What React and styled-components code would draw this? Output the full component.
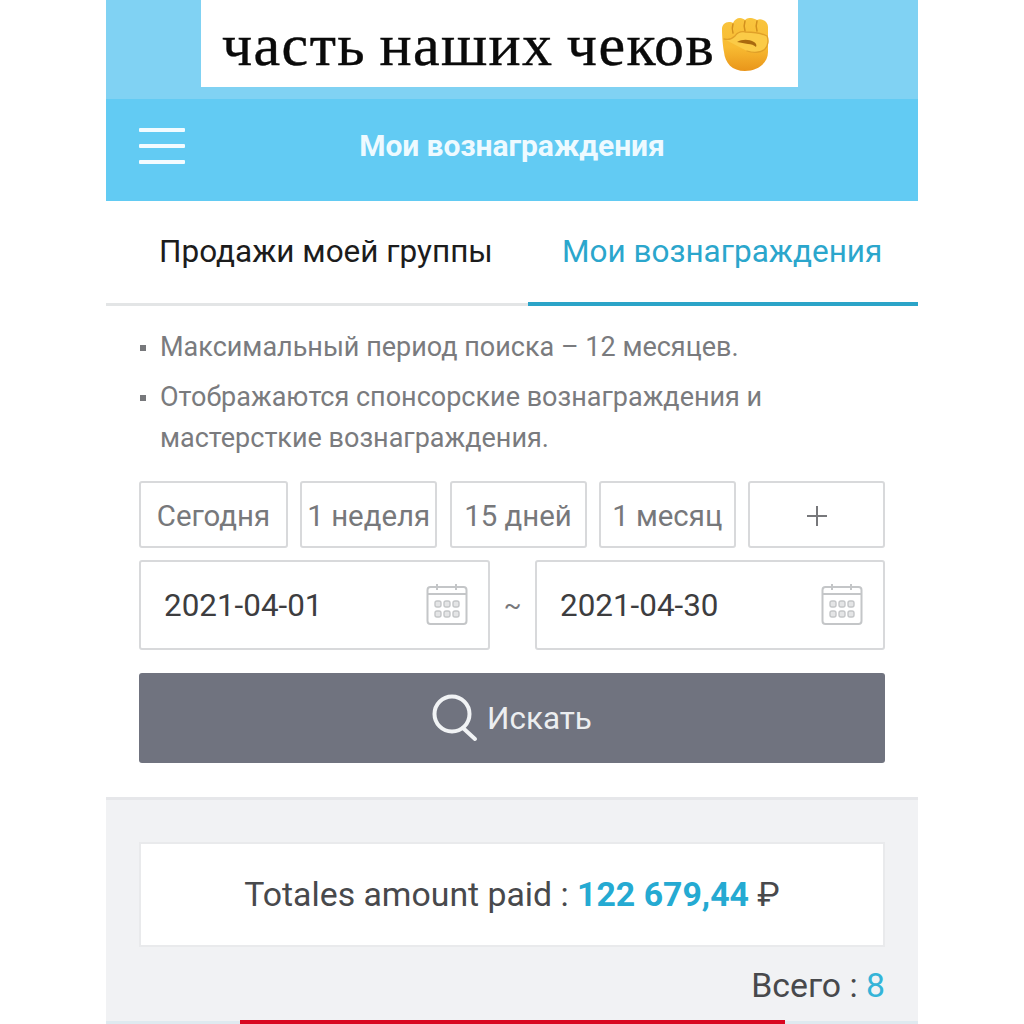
import React from "react";
import styled, { createGlobalStyle } from "styled-components";

const GlobalStyle = createGlobalStyle`
  html, body {
    margin: 0;
    padding: 0;
    background: #fff;
  }
  body {
    font-family: Roboto, "Liberation Sans", sans-serif;
  }
`;

const Page = styled.div`
  width: 1024px;
  height: 1024px;
  overflow: hidden;
  display: flex;
  justify-content: center;
  background: #fff;
`;

const Phone = styled.div`
  width: 812px;
  display: flex;
  flex-direction: column;
`;

const TopBand = styled.div`
  height: 99px;
  flex: none;
  background: #80d2f3;
  padding-left: 95px;
`;

const Caption = styled.div`
  width: 597px;
  height: 87px;
  background: #fff;
  display: flex;
  align-items: flex-end;
  padding: 0 0 7px 21px;
  box-sizing: border-box;
  font-family: "Liberation Serif", serif;
  font-size: 60px;
  line-height: 70px;
  letter-spacing: 1.4px;
  word-spacing: -3px;
  -webkit-text-stroke: 0.4px #0a0a0a;
  color: #0a0a0a;
  white-space: nowrap;
`;

const Fist = styled.svg`
  width: 50px;
  height: 54px;
  flex: none;
  margin: 0 0 9px 6px;
`;

const Header = styled.div`
  height: 102px;
  flex: none;
  background: #62cbf3;
  display: flex;
  align-items: center;
  padding-left: 33px;
`;

const Burger = styled.div`
  width: 46px;
  display: flex;
  flex-direction: column;
  gap: 12px;
  margin-top: -9px;
`;

const BurgerLine = styled.span`
  height: 4px;
  background: #f2fbff;
  border-radius: 1px;
`;

const HeaderTitle = styled.div`
  flex: 1;
  text-align: center;
  margin: -10px 0 0 0;
  padding-right: 79px;
  color: #eefaff;
  font-size: 30px;
  font-weight: 700;
  letter-spacing: -0.1px;
`;

const Tabs = styled.div`
  height: 105px;
  flex: none;
  display: flex;
`;

const Tab = styled.div`
  width: ${(p) => (p.$active ? "390px" : "422px")};
  box-sizing: border-box;
  border-bottom: ${(p) => (p.$active ? "4px solid #2ba4c8" : "3px solid #e3e5e6")};
  padding-top: 32px;
  padding-left: ${(p) => (p.$active ? "34px" : "53px")};
  font-size: 31.5px;
  line-height: 38px;
  color: ${(p) => (p.$active ? "#2ba6cc" : "#1c1c1c")};
  white-space: nowrap;
`;

const Content = styled.div`
  padding: 21px 33px 0;
  display: flex;
  flex-direction: column;
`;

const Notes = styled.ul`
  margin: 0;
  padding: 0;
  list-style: none;
  display: flex;
  flex-direction: column;
  gap: 9px;
`;

const Note = styled.li`
  position: relative;
  padding-left: 21px;
  font-size: 27px;
  line-height: 41px;
  color: #7a7b7e;

  &::before {
    content: "";
    position: absolute;
    left: 1px;
    top: 18px;
    width: 6px;
    height: 6px;
    background: #77787b;
  }
`;

const Presets = styled.div`
  display: grid;
  grid-template-columns: 149px repeat(4, 137px);
  justify-content: space-between;
  margin-top: 22px;
`;

const Preset = styled.div`
  height: 67px;
  box-sizing: border-box;
  border: 2px solid #d8d9db;
  border-radius: 3px;
  display: flex;
  align-items: center;
  justify-content: center;
  padding-top: 2px;
  font-size: 29.4px;
  color: #77787b;
  white-space: nowrap;
`;

const PlusMark = styled.svg`
  width: 24px;
  height: 24px;
`;

const DateRow = styled.div`
  display: flex;
  align-items: center;
  margin-top: 12px;
`;

const DateField = styled.div`
  width: ${(p) => p.$width}px;
  height: 90px;
  box-sizing: border-box;
  border: 2px solid #d8d9db;
  border-radius: 3px;
  display: flex;
  align-items: center;
  justify-content: space-between;
  padding: 0 20px 0 23px;
  font-size: 31.4px;
  color: #3d3d3f;
`;

const Calendar = styled.svg`
  width: 42px;
  height: 42px;
  margin-top: -2px;
`;

const Tilde = styled.div`
  flex: 1;
  text-align: center;
  font-size: 26px;
  color: #77787b;
`;

const SearchButton = styled.div`
  height: 90px;
  margin-top: 23px;
  background: #70737f;
  border-radius: 3px;
  display: flex;
  align-items: center;
  justify-content: center;
  gap: 9px;
  color: #eceef0;
  font-size: 31.4px;
`;

const Summary = styled.div`
  margin-top: 34px;
  flex: 1;
  background: #f1f2f4;
  border-top: 3px solid #e6e7ea;
  padding: 42px 33px 0;
  display: flex;
  flex-direction: column;
  position: relative;
`;

const AmountCard = styled.div`
  height: 105px;
  box-sizing: border-box;
  background: #fff;
  border: 2px solid #e9eaec;
  display: flex;
  align-items: center;
  justify-content: center;
  font-size: 33.8px;
  color: #48494c;
  white-space: pre;
`;

const Amount = styled.span`
  color: #25aad2;
  font-weight: 700;
`;

const Count = styled.div`
  margin-top: 19px;
  text-align: right;
  font-size: 33.8px;
  color: #48494c;
`;

const CountValue = styled.span`
  color: #35b4d8;
`;

const RedBar = styled.div`
  position: absolute;
  left: 134px;
  bottom: 0;
  width: 545px;
  height: 4px;
  background: #d9061f;
`;

const BottomLine = styled.div`
  position: absolute;
  left: 0;
  right: 0;
  bottom: 0;
  height: 3px;
  background: #dfeaf0;
`;

const CalendarIcon = () => (
  <Calendar viewBox="0 0 42 42" fill="none" stroke="#c4c6c8" strokeWidth="2">
    <rect x="1.5" y="4" width="39" height="37" rx="3" />
    <path d="M1.5 11h39M11 1v6M30 1v6" />
    <g fill="#e4e5e6" strokeWidth="1.4">
      <rect x="9" y="18" width="6" height="6" rx="2" />
      <rect x="18" y="18" width="6" height="6" rx="2" />
      <rect x="27" y="18" width="6" height="6" rx="2" />
      <rect x="9" y="28" width="6" height="6" rx="2" />
      <rect x="18" y="28" width="6" height="6" rx="2" />
      <rect x="27" y="28" width="6" height="6" rx="2" />
    </g>
  </Calendar>
);

const SearchIcon = () => (
  <svg width="46" height="48" viewBox="0 0 46 48" fill="none" stroke="#f1f3f5" strokeWidth="4" strokeLinecap="round">
    <circle cx="20" cy="20" r="17.5" />
    <path d="M31 34l12 11" />
  </svg>
);

// raised fist drawn by hand, the emoji font is not installed
const FistIcon = () => (
  <Fist viewBox="0 0 50 54">
    <defs>
      <linearGradient id="fistFill" x1="0" y1="0" x2="0" y2="1">
        <stop offset="0" stopColor="#f9c53e" />
        <stop offset="0.55" stopColor="#f8bb32" />
        <stop offset="1" stopColor="#e9951a" />
      </linearGradient>
    </defs>
    <path
      d="M1 12c0-4 3-7 7-7 2 0 3 0 4 1 1-3 4-5 7-5 2 0 4 1 5 2 2-2 4-2 6-2 2 0 4 1 6 2 2-1 4-1 6 0 3 1 5 4 5 7v25c0 11-10 19-23 19C11 54 4 46 3 35 2 30 1 20 1 12z"
      fill="url(#fistFill)"
    />
    <path
      d="M12 7c-1 3-1 6 0 9M24 4c-1 3-1 7 0 10M36 4c-1 3-1 7 0 10"
      fill="none"
      stroke="#d2901e"
      strokeWidth="1.5"
      strokeLinecap="round"
    />
    <path
      d="M3 22c4 1 8 0 11-3 2-3 6-5 11-4 8 0 15 1 21 4 2 4 1 10-2 13-4 4-12 4-18 2"
      fill="#fbcb47"
      stroke="#e0a028"
      strokeWidth="1.3"
      strokeLinecap="round"
    />
    <path
      d="M16 25c5-3 12-3 17 0 2 1 3 3 2 5-2-2-5-3-8-3-4-1-7-1-11-2z"
      fill="#a9690f"
    />
  </Fist>
);

const presets = ["Сегодня", "1 неделя", "15 дней", "1 месяц"];

export default function App() {
  return (
    <Page>
      <GlobalStyle />
      <Phone>
        <TopBand>
          <Caption>
            часть наших чеков
            <FistIcon />
          </Caption>
        </TopBand>

        <Header>
          <Burger>
            <BurgerLine />
            <BurgerLine />
            <BurgerLine />
          </Burger>
          <HeaderTitle>Мои вознаграждения</HeaderTitle>
        </Header>

        <Tabs>
          <Tab>Продажи моей группы</Tab>
          <Tab $active>Мои вознаграждения</Tab>
        </Tabs>

        <Content>
          <Notes>
            <Note>Максимальный период поиска – 12 месяцев.</Note>
            <Note>Отображаются спонсорские вознаграждения и мастерсткие вознаграждения.</Note>
          </Notes>

          <Presets>
            {presets.map((label) => (
              <Preset key={label}>{label}</Preset>
            ))}
            <Preset>
              <PlusMark viewBox="0 0 24 24" stroke="#77787b" strokeWidth="2">
                <path d="M12 2v20M2 12h20" />
              </PlusMark>
            </Preset>
          </Presets>

          <DateRow>
            <DateField $width={351}>
              2021-04-01
              <CalendarIcon />
            </DateField>
            <Tilde>~</Tilde>
            <DateField $width={350}>
              2021-04-30
              <CalendarIcon />
            </DateField>
          </DateRow>

          <SearchButton>
            <SearchIcon />
            Искать
          </SearchButton>
        </Content>

        <Summary>
          <AmountCard>
            Totales amount paid : <Amount>122 679,44</Amount> ₽
          </AmountCard>
          <Count>
            Всего : <CountValue>8</CountValue>
          </Count>
          <BottomLine />
          <RedBar />
        </Summary>
      </Phone>
    </Page>
  );
}
